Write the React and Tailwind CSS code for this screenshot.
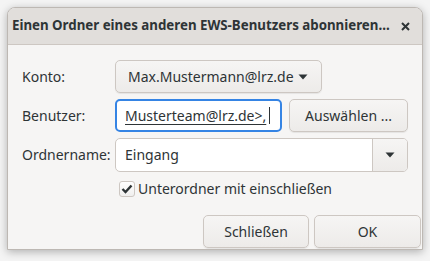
import React from "react";

function Caret() {
  return (
    <svg width="10" height="6" viewBox="0 0 10 6" className="shrink-0">
      <path d="M0.5 0.5 L9.5 0.5 L5 5.5 Z" fill="#2e3436" />
    </svg>
  );
}

export default function App() {
  const font = { fontFamily: '"Noto Sans", "Open Sans", sans-serif' };
  const btn =
    "rounded-[5px] border border-[#cdc7c2] bg-gradient-to-b from-[#f6f5f4] to-[#edebe9] shadow-[0_1px_1px_rgba(0,0,0,0.07)]";
  return (
    <div
      className="w-[430px] h-[261px] bg-[#f4f4f4] pl-[7px] pt-[7px] text-[#2e3436] text-[14px] leading-none"
      style={font}
    >
      <div className="w-[416px] h-[243px] flex flex-col rounded-t-[8px] border border-[#bdb8b3] bg-[#f6f5f4] shadow-[0_2px_8px_rgba(0,0,0,0.28)] overflow-hidden">
        <div className="h-[37px] shrink-0 flex items-center justify-between pl-[4px] pr-[12px] bg-[#e1dedb] border-b border-[#cdc7c2]">
          <span className="font-bold text-[13.3px] whitespace-nowrap">
            Einen Ordner eines anderen EWS-Benutzers abonnieren...
          </span>
          <svg width="9" height="9" viewBox="0 0 9 9" className="shrink-0">
            <path d="M1 1 L8 8 M8 1 L1 8" stroke="#2e3436" strokeWidth="2" />
          </svg>
        </div>
        <div className="flex-1 flex flex-col pl-[14px] pr-[14px] pt-[15px]">
          <div className="grid grid-cols-[93px_1fr] gap-y-[6px] items-center">
            <span>Konto:</span>
            <div>
              <div className={`${btn} w-[207px] h-[33px] flex items-center justify-between pl-[12px] pr-[13px]`}>
                <span>Max.Mustermann@lrz.de</span>
                <Caret />
              </div>
            </div>
            <span>Benutzer:</span>
            <div className="flex gap-[7px]">
              <div className="w-[167px] h-[33px] rounded-[5px] border-2 border-[#3584e4] bg-white flex items-center pl-[8px]">
                <span className="underline underline-offset-[3px] decoration-1">Musterteam@lrz.de&gt;,</span>
                <span className="ml-[3px] w-px h-[17px] bg-[#2e3436]" />
              </div>
              <div className={`${btn} w-[119px] h-[33px] flex items-center justify-center`}>
                Auswählen ...
              </div>
            </div>
            <span>Ordnername:</span>
            <div className="w-[293px] h-[34px] flex rounded-[5px] border border-[#cdc7c2] bg-white overflow-hidden">
              <div className="flex-1 flex items-center pl-[9px]">Eingang</div>
              <div className="w-[35px] border-l border-[#cdc7c2] bg-gradient-to-b from-[#f6f5f4] to-[#edebe9] flex items-center justify-center">
                <Caret />
              </div>
            </div>
          </div>
          <div className="mt-[9px] ml-[97px] flex items-center gap-[3px]">
            <div className="w-[16px] h-[16px] rounded-[3px] border border-[#cdc7c2] bg-gradient-to-b from-white to-[#f0efee] flex items-center justify-center">
              <svg width="12" height="10" viewBox="0 0 12 10">
                <path d="M1.5 5 L4.5 8 L10.5 1.5" stroke="#2e3436" strokeWidth="2.4" fill="none" />
              </svg>
            </div>
            <span>Unterordner mit einschließen</span>
          </div>
          <div className="flex-1" />
          <div className="flex justify-end gap-[5px] -mr-[13px] mb-[1px]">
            <div className={`${btn} w-[106px] h-[33px] flex items-center justify-center`}>Schließen</div>
            <div className={`${btn} w-[107px] h-[33px] flex items-center justify-center`}>OK</div>
          </div>
        </div>
      </div>
    </div>
  );
}
